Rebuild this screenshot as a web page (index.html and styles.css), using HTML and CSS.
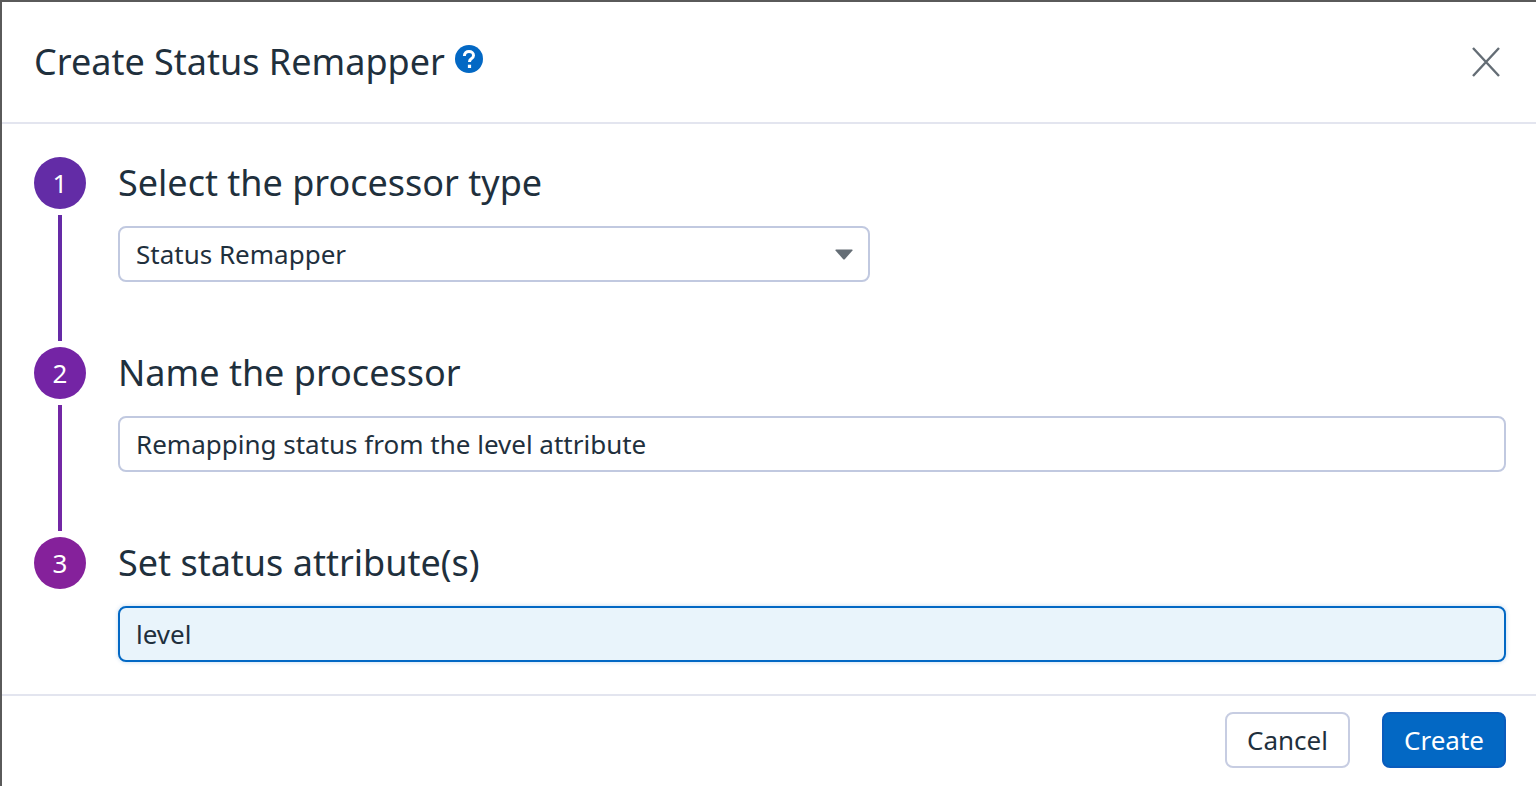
FILE: index.html
```html
<!DOCTYPE html>
<html lang="en">
<head>
<meta charset="utf-8">
<title>Create Status Remapper</title>
<link rel="stylesheet" href="styles.css">
</head>
<body>
<div class="modal">
  <header class="head">
    <div class="title-wrap">
      <h1 class="title">Create Status Remapper</h1>
      <svg class="help" viewBox="0 0 28 28" aria-hidden="true"><circle cx="14" cy="14" r="14" fill="#0368c4"/><path d="M9.400 10.900C9.400 8.100 11.400 6.600 14 6.600c2.600 0 4.500 1.500 4.500 3.800 0 2-1.300 2.900-2.500 3.700-1 .7-1.500 1.300-1.500 2.800" fill="none" stroke="#fff" stroke-width="3"/><rect x="12.900" y="19.700" width="3.200" height="3.300" fill="#fff"/></svg>
    </div>
    <svg class="close" viewBox="0 0 28 30" aria-hidden="true"><path d="M1 1 27 29M27 1 1 29" stroke="#646d75" stroke-width="2.400" fill="none"/></svg>
  </header>
  <main class="steps">
    <section class="step">
      <div class="rail"><span class="dot dot-1">1</span><span class="line line-1"></span></div>
      <div class="content">
        <h2 class="label">Select the processor type</h2>
        <div class="field select">Status Remapper<svg class="caret" viewBox="0 0 18 11" aria-hidden="true"><path d="M1 .5H17Q18 .5 17.500 1.500L9.800 10.200Q9 11 8.200 10.200L.5 1.500Q0 .5 1 .5Z" fill="#646d75"/></svg></div>
      </div>
    </section>
    <section class="step">
      <div class="rail"><span class="dot dot-2">2</span><span class="line line-2"></span></div>
      <div class="content">
        <h2 class="label">Name the processor</h2>
        <div class="field">Remapping status from the level attribute</div>
      </div>
    </section>
    <section class="step last">
      <div class="rail"><span class="dot dot-3">3</span></div>
      <div class="content">
        <h2 class="label">Set status attribute(s)</h2>
        <div class="field focus">level</div>
      </div>
    </section>
  </main>
  <footer class="foot">
    <button class="btn cancel" type="button">Cancel</button>
    <button class="btn create" type="button">Create</button>
  </footer>
</div>
</body>
</html>
```

FILE: styles.css
```css
* { box-sizing: border-box; }
html, body { margin: 0; height: 100%; overflow: hidden; }
body { font-family: "Noto Sans", sans-serif; color: #1f303d; background: #fff; }
.modal {
  width: 1536px; height: 786px;
  border-top: 2px solid #5a5a5a;
  border-left: 2px solid #5a5a5a;
  display: flex; flex-direction: column;
}
.head {
  height: 122px; flex: none;
  border-bottom: 2px solid #e3e5ef;
  padding: 0 36px 0 32px;
  display: flex; align-items: center; justify-content: space-between;
}
.title-wrap { display: flex; align-items: flex-start; }
.title { margin: 0; font-size: 36px; font-weight: 400; line-height: 50px; }
.help { width: 28px; height: 28px; margin: 8px 0 0 10px; }
.close { width: 28px; height: 30px; }
.steps { flex: none; height: 572px; padding: 33px 30px 0 32px; border-bottom: 2px solid #e3e5ef; }
.step { display: flex; height: 190px; }
.rail { width: 84px; flex: none; display: flex; flex-direction: column; align-items: flex-start; }
.dot {
  width: 52px; height: 52px; border-radius: 50%;
  color: #fff; font-size: 26px; line-height: 52px; text-align: center;
}
.dot-1 { background: #632ca6; }
.dot-2 { background: #7424a5; }
.dot-3 { background: #85219b; }
.line { width: 4px; height: 126px; margin: 6px 0 0 24px; }
.line-1 { background: #652aa6; }
.line-2 { background: #7327a5; }
.content { flex: 1; min-width: 0; }
.label { margin: 0 0 17px; font-size: 36px; font-weight: 400; line-height: 52px; }
.field {
  height: 56px; border: 2px solid #c1c9e0; border-radius: 8px;
  padding: 0 16px; font-size: 26px; line-height: 52px;
  background: #fff; white-space: nowrap;
}
.select { width: 752px; display: flex; align-items: center; justify-content: space-between; padding-right: 15px; }
.caret { width: 18px; height: 11px; }
.focus { background: #e9f4fb; border-color: #0368c4; box-shadow: 0 0 4px rgba(3,104,196,.25); }
.foot {
  flex: 1; display: flex; justify-content: flex-end; align-items: flex-start;
  gap: 32px; padding: 16px 30px 0 0;
}
.btn {
  height: 56px; border-radius: 8px; font: 400 26px/52px "Noto Sans", sans-serif;
  padding: 0; cursor: pointer;
}
.cancel { width: 125px; background: #fff; border: 2px solid #c7cde2; color: #1f303d; }
.create { width: 124px; background: #0368c4; border: 2px solid #0a5cbc; color: #fff; }
```
